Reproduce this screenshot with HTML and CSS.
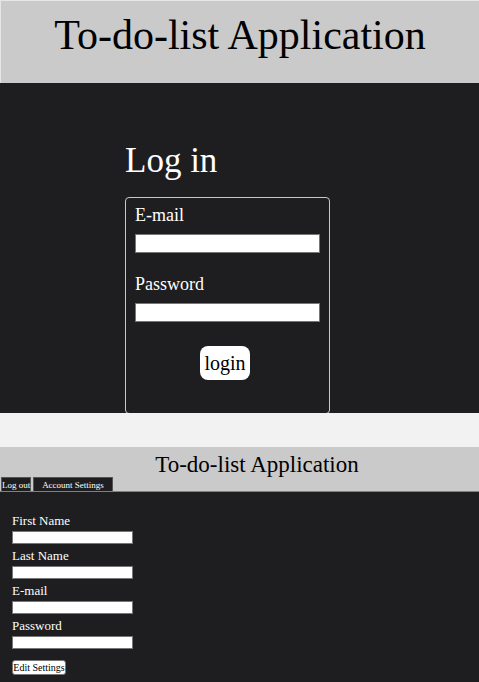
FILE: index.html
```html
<!DOCTYPE html>
<html>
<head>
<meta charset="utf-8">
<link rel="stylesheet" href="styles.css">
</head>
<body>
<section class="page-login">
  <header class="top">
    <h1 class="top-title">To-do-list Application</h1>
  </header>
  <main class="login-main">
    <div class="login-wrap">
      <h2 class="login-title">Log in</h2>
      <form class="login-box">
        <label class="login-label">E-mail</label>
        <input class="login-input" type="text">
        <label class="login-label pw">Password</label>
        <input class="login-input" type="password">
        <div class="login-btn-row"><button type="button" class="login-btn">login</button></div>
      </form>
    </div>
  </main>
</section>
<div class="gap"></div>
<section class="page-settings">
  <header class="top2">
    <h1 class="top2-title">To-do-list Application</h1>
    <nav class="nav">
      <button type="button" class="nav-btn">Log out</button>
      <button type="button" class="nav-btn wide">Account Settings</button>
    </nav>
  </header>
  <main class="settings-main">
    <form class="settings-form">
      <label class="s-label">First Name</label>
      <input class="s-input" type="text">
      <label class="s-label">Last Name</label>
      <input class="s-input" type="text">
      <label class="s-label">E-mail</label>
      <input class="s-input" type="text">
      <label class="s-label">Password</label>
      <input class="s-input" type="password">
      <button type="button" class="s-btn">Edit Settings</button>
    </form>
  </main>
</section>
</body>
</html>
```
FILE: styles.css
```css
* { box-sizing: border-box; }
html, body { margin: 0; padding: 0; }
body {
  width: 479px;
  height: 682px;
  overflow: hidden;
  background: #f2f2f2;
  font-family: "Liberation Serif", "Times New Roman", serif;
}
.page-login { display: flex; flex-direction: column; }
.top {
  height: 83px;
  background: #cacaca;
  border-top: 1px solid #e6e6e6;
  border-left: 1px solid #e6e6e6;
  display: flex;
  justify-content: center;
}
.top-title {
  margin: 10px 0 0 0;
  font-size: 42px;
  font-weight: normal;
  line-height: 48px;
  color: #000;
}
.login-main {
  height: 330px;
  background: #1e1e20;
  padding-left: 125px;
  overflow: hidden;
}
.login-wrap { display: flex; flex-direction: column; width: 205px; }
.login-title {
  margin: 57px 0 0 0;
  font-size: 35px;
  line-height: 42px;
  font-weight: normal;
  color: #fff;
}
.login-box {
  margin-top: 15px;
  height: 217px;
  flex-shrink: 0;
  border: 1px solid #c8c8c8;
  border-radius: 4px;
  padding: 6px 9px 0 9px;
  display: flex;
  flex-direction: column;
}
.login-label {
  font-size: 18px;
  line-height: 22px;
  color: #fff;
}
.login-label.pw { margin-top: 20px; }
.login-input {
  margin-top: 8px;
  width: 185px;
  height: 19px;
  border: 1px solid #767676;
  background: #fff;
  padding: 0;
}
.login-btn-row { display: flex; margin-top: 24px; padding-left: 65px; }
.login-btn {
  width: 50px;
  height: 34px;
  border: none;
  border-radius: 8px;
  background: #fff;
  font-family: inherit;
  font-size: 20px;
  color: #000;
  padding: 0;
}
.gap { height: 34px; }
.top2 {
  height: 45px;
  background: #cacaca;
  border-bottom: 1px solid #808080;
  display: flex;
  flex-direction: column;
}
.top2-title {
  margin: 5px 0 0 35px;
  text-align: center;
  font-size: 23px;
  line-height: 25px;
  font-weight: normal;
  color: #000;
}
.nav { display: flex; gap: 2px; padding-left: 1px; }
.nav-btn {
  width: 30px;
  height: 14px;
  background: #1e1e20;
  color: #fff;
  border: 1px solid #555;
  border-bottom: none;
  font-family: inherit;
  font-size: 9px;
  padding: 0;
  line-height: 12px;
  white-space: nowrap;
}
.nav-btn.wide { width: 80px; }
.settings-main {
  height: 200px;
  background: #1e1e20;
  padding: 21px 0 0 12px;
}
.settings-form { display: flex; flex-direction: column; align-items: flex-start; }
.s-label {
  font-size: 13px;
  line-height: 15px;
  color: #fff;
}
.s-input {
  width: 121px;
  height: 13px;
  margin: 3px 0 4px 0;
  padding: 0;
  border: 1px solid #767676;
  background: #fff;
}
.s-btn {
  margin-top: 7px;
  width: 54px;
  height: 15px;
  border: 1px solid #767676;
  border-radius: 3px;
  background: #fff;
  font-family: inherit;
  font-size: 10px;
  line-height: 13px;
  padding: 0;
  color: #000;
  white-space: nowrap;
}
```
